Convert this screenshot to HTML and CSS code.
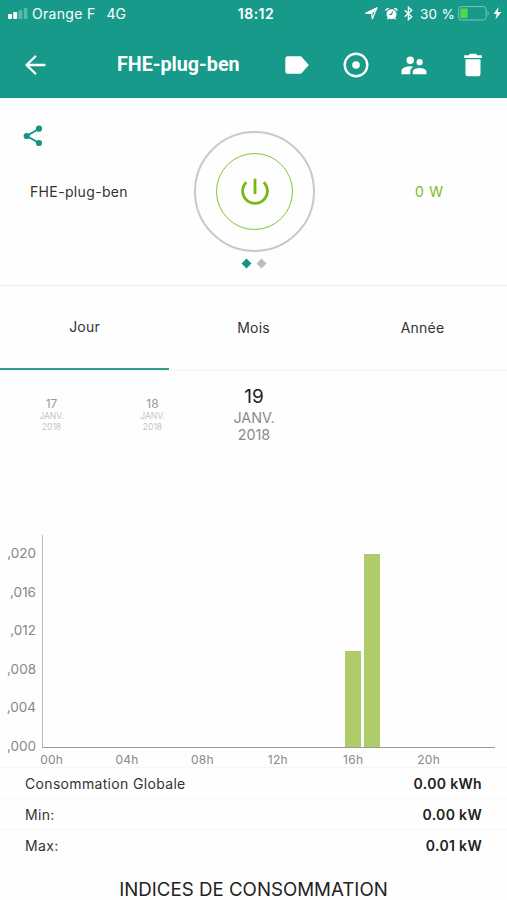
FILE: index.html
```html
<!DOCTYPE html>
<html lang="fr">

<head>
    <meta charset="UTF-8">
    <meta name="viewport" content="width=device-width, initial-scale=1.0">
    <title>FHE-plug-ben</title>
    <link rel="stylesheet" href="styles.css">
</head>

<body>
    <header class="header">
        <div class="status-bar">
            <div class="status-left">
                <svg class="signal" width="20" height="12" viewBox="0 0 20 12" fill="#fff">
                    <rect x="0" y="6" width="4" height="5" rx="1"/>
                    <rect x="5.2" y="4" width="4" height="7" rx="1"/>
                    <rect x="10.6" y="2" width="3.6" height="9" rx="1" opacity=".3"/>
                    <rect x="15.8" y="0" width="3.6" height="11" rx="1" opacity=".3"/>
                </svg>
                <span class="carrier">Orange F</span>
                <span class="network">4G</span>
            </div>
            <div class="clock">18:12</div>
            <div class="status-right">
                <svg width="13" height="13" viewBox="0 0 13 13" fill="none" stroke="#fff" stroke-width="1.2" stroke-linejoin="round">
                    <path d="M1 6.2L11.8 1 7.4 11.8 6.6 6.4z"/>
                    <path d="M1 6.2L11.8 1 6.6 6.4z" fill="#fff"/>
                </svg>
                <svg class="alarm" width="13" height="14" viewBox="0 0 13 14">
                    <path d="M3.4 10.8l-1 1.5M9.6 10.8l1 1.5" stroke="#fff" stroke-width="1.3"/>
                    <path d="M.7 4.2A2.3 2.3 0 0 1 4.2 1.4zM12.3 4.2A2.3 2.3 0 0 0 8.8 1.4z" fill="#fff"/>
                    <circle cx="6.5" cy="7.3" r="5" fill="#fff"/>
                    <path d="M7.6 4.4L6.6 7.4H4.4" stroke="#189a8a" stroke-width="1.1" fill="none"/>
                </svg>
                <svg class="bluetooth" width="9" height="15" viewBox="0 0 9 15" fill="none" stroke="#fff" stroke-width="1.3">
                    <path d="M.7 4.3l7.1 6.4-3.4 3V1.3l3.4 3-7.1 6.4"/>
                </svg>
                <span class="percent">30 %</span>
                <svg class="battery" width="32" height="15" viewBox="0 0 32 15">
                    <rect x=".6" y=".6" width="27.5" height="13.4" rx="2.6" fill="none" stroke="#7fc5bc" stroke-width="1"/>
                    <rect x="2.2" y="2.5" width="7.5" height="9.6" rx="1" fill="#4cd84f"/>
                    <path d="M29.6 5.3a2.3 2.3 0 0 1 0 4z" fill="#7fc5bc"/>
                </svg>
                <svg width="9" height="13" viewBox="0 0 9 13" fill="#fff">
                    <path d="M5.6 0L.6 7.1h3.1L2.4 12.6 8.4 4.9H4.8z"/>
                </svg>
            </div>
        </div>
        <nav class="toolbar">
            <svg class="back" width="24" height="22" viewBox="0 0 24 22" fill="none" stroke="#fff" stroke-width="2.3" stroke-linecap="round" stroke-linejoin="round">
                <path d="M20.5 11H3M11.3 2.5L2.5 11l8.800 8.500"/>
            </svg>
            <h1>FHE-plug-ben</h1>
            <div class="actions">
                <svg width="30" height="30" viewBox="0 0 30 30" fill="#fff">
                    <path d="M18.2 6.3c.8 0 1.5.4 2 1.1L26.8 15l-6.6 7.6c-.5.7-1.2 1.1-2 1.1H5.8a2.5 2.5 0 0 1-2.5-2.5V8.8a2.5 2.5 0 0 1 2.5-2.5z"/>
                </svg>
                <svg width="30" height="30" viewBox="0 0 30 30">
                    <circle cx="15" cy="15" r="11.3" fill="none" stroke="#fff" stroke-width="2.4"/>
                    <circle cx="15" cy="15" r="3.8" fill="#fff"/>
                </svg>
                <svg width="30" height="30" viewBox="0 0 24 24" fill="#fff">
                    <path d="M16.500 12.200a2.500 2.500 0 1 0 0-5 2.500 2.500 0 0 0 0 5zM9 11.200a3 3 0 1 0 0-6 3 3 0 0 0 0 6zm7.500 3.100c-1.830 0-5.500.92-5.500 2.750V19.300h11v-2.250c0-1.830-3.670-2.750-5.500-2.750zM9 13c-2.330 0-7 1.170-7 3.500v2.800h7v-2.250c0-.85.330-2.340 2.370-3.470C10.500 13.100 9.660 13 9 13z"/>
                </svg>
                <svg width="30" height="30" viewBox="0 0 30 30" fill="#fff">
                    <path d="M6.200 5.200h4.500L12 3.700h6l1.300 1.500h4.500v2.900H6.200zM7.500 9.300h15v14.500a2.500 2.500 0 0 1-2.500 2.500H10a2.500 2.500 0 0 1-2.500-2.500z"/>
                </svg>
            </div>
        </nav>
    </header>

    <section class="device">
        <div class="device-side">
            <svg class="share" width="20" height="22" viewBox="0 0 20 22" fill="#159482">
                <path d="M16 3.700L3.700 11 16 18" fill="none" stroke="#159482" stroke-width="1.900"/>
                <circle cx="16" cy="3.700" r="3.100"/>
                <circle cx="3.700" cy="11" r="3.100"/>
                <circle cx="16" cy="18" r="3.100"/>
            </svg>
            <span class="device-name">FHE-plug-ben</span>
        </div>
        <div class="device-center">
            <div class="power-ring">
                <div class="power-button">
                    <svg width="30" height="30" viewBox="0 0 30 30" fill="none" stroke="#78b814" stroke-width="2.800">
                        <path d="M15 1.800v15.200M6.300 5.200a12.400 12.400 0 1 0 17.400 0"/>
                    </svg>
                </div>
            </div>
            <div class="pager">
                <span class="dot active"></span>
                <span class="dot"></span>
            </div>
        </div>
        <div class="device-power">0 W</div>
    </section>

    <div class="tabs">
        <div class="tab active">Jour</div>
        <div class="tab">Mois</div>
        <div class="tab">Année</div>
    </div>

    <div class="dates">
        <div class="date"><b>17</b><span>JANV.</span><span>2018</span></div>
        <div class="date"><b>18</b><span>JANV.</span><span>2018</span></div>
        <div class="date current"><b>19</b><span>JANV.</span><span>2018</span></div>
    </div>

    <section class="chart">
        <div class="chart-body">
            <div class="y-axis">
                <span>,020</span>
                <span>,016</span>
                <span>,012</span>
                <span>,008</span>
                <span>,004</span>
                <span>,000</span>
            </div>
            <div class="plot">
                <div class="bar h16" style="height: 96px"></div>
                <div class="bar h17" style="height: 193px"></div>
            </div>
        </div>
        <div class="x-axis">
            <span>00h</span>
            <span>04h</span>
            <span>08h</span>
            <span>12h</span>
            <span>16h</span>
            <span>20h</span>
        </div>
    </section>

    <div class="summary">
        <div class="row"><span>Consommation Globale</span><strong>0.00 kWh</strong></div>
        <div class="row"><span>Min:</span><strong>0.00 kW</strong></div>
        <div class="row"><span>Max:</span><strong>0.01 kW</strong></div>
    </div>

    <h2>INDICES DE CONSOMMATION</h2>
</body>

</html>
```
FILE: styles.css
```css
* {
    box-sizing: border-box;
}

body {
    margin: 0;
    height: 900px;
    overflow: hidden;
    background-color: #fefefe;
    color: #333;
    font-family: Inter, "Liberation Sans", sans-serif;
    font-size: 14px;
}

svg {
    display: block;
    flex-shrink: 0;
}

/* header */
.header {
    height: 98px;
    background-color: #189a8a;
    color: #fff;
}

.status-bar {
    display: grid;
    grid-template-columns: 1fr 60px 1fr;
    align-items: center;
    height: 27px;
    padding: 0 5px 0 8px;
    white-space: nowrap;
}

.status-left,
.status-right {
    display: flex;
    align-items: center;
}

.status-right {
    justify-content: flex-end;
}

.carrier {
    margin-left: 4px;
    letter-spacing: 0.3px;
}

.network {
    margin-left: 11px;
}

.clock {
    padding-left: 2px;
    text-align: center;
    font-weight: 600;
    letter-spacing: 0.5px;
}

.alarm {
    margin-left: 7px;
}

.bluetooth {
    margin-left: 6px;
}

.percent {
    margin: 0 3px 0 7px;
    font-size: 13.5px;
    letter-spacing: 0.3px;
}

.battery {
    margin-right: 3px;
}

.toolbar {
    display: flex;
    align-items: center;
    height: 75px;
    padding: 0 19px 0 24px;
}

.toolbar h1 {
    margin: 0 0 0 69px;
    font-family: Roboto, sans-serif;
    font-size: 19.7px;
    font-weight: 700;
    white-space: nowrap;
}

.actions {
    display: flex;
    gap: 28.7px;
    margin-left: auto;
}

/* device */
.device {
    display: grid;
    grid-template-columns: 194px 121px 1fr;
    height: 188px;
    border-bottom: 1px solid #eee;
}

.device-side {
    padding: 27px 0 0 23px;
}

.device-name {
    display: block;
    margin: 35px 0 0 7px;
    line-height: 20px;
    letter-spacing: 0.35px;
}

.device-center {
    padding-top: 33px;
}

.power-ring {
    display: flex;
    align-items: center;
    justify-content: center;
    width: 121px;
    height: 121px;
    border: 2px solid #c9c9cb;
    border-radius: 50%;
}

.power-button {
    display: flex;
    align-items: center;
    justify-content: center;
    width: 77px;
    height: 77px;
    border: 1.5px solid #84c340;
    border-radius: 50%;
}

.pager {
    display: flex;
    justify-content: center;
    gap: 8px;
    margin: 8px 1px 0 0;
}

.dot {
    width: 7px;
    height: 7px;
    background-color: #bbb;
    transform: rotate(45deg);
}

.dot.active {
    background-color: #159482;
}

.device-power {
    padding: 84px 0 0 100px;
    color: #7dbb22;
    line-height: 20px;
    letter-spacing: 0.8px;
}

/* period tabs */
.tabs {
    display: grid;
    grid-template-columns: repeat(3, 1fr);
    height: 85px;
    border-bottom: 1px solid #f3f3f3;
}

.tab {
    height: 84px;
    line-height: 84px;
    text-align: center;
    letter-spacing: 0.2px;
}

.tab.active {
    line-height: 82px;
    border-bottom: 2.5px solid #2f9c8c;
}

.dates {
    display: grid;
    grid-template-columns: 101px 101px 102px;
    height: 164px;
    padding-left: 1px;
}

.date {
    display: flex;
    flex-direction: column;
    padding-top: 25px;
    text-align: center;
    font-size: 8.5px;
    line-height: 10.5px;
    color: #c4c4c4;
}

.date b {
    font-size: 12px;
    font-weight: 400;
    line-height: 15px;
    color: #999;
}

.date.current {
    padding-top: 14px;
    font-size: 14.3px;
    line-height: 17px;
    color: #8a8a8a;
}

.date.current b {
    font-size: 19px;
    line-height: 24px;
    color: #222;
}

/* chart */
.chart {
    height: 232px;
    color: #888;
}

.chart-body {
    display: flex;
    height: 213px;
}

.y-axis {
    display: flex;
    flex-direction: column;
    width: 42px;
    margin-top: -1px;
    padding-right: 6px;
    text-align: right;
    font-size: 13.5px;
    line-height: 38.6px;
}

.plot {
    display: grid;
    grid-template-columns: repeat(24, 1fr);
    align-items: end;
    width: 453px;
    border-left: 1px solid #bbb;
    border-bottom: 1px solid #999;
}

.bar {
    width: 16px;
    margin-left: 1px;
    background-color: #afcc6b;
}

.h16 {
    grid-column: 17;
}

.h17 {
    grid-column: 18;
}

.x-axis {
    display: grid;
    grid-template-columns: repeat(6, 75.4px);
    margin-left: 14px;
    padding-top: 4px;
    font-size: 12px;
    line-height: 16px;
    text-align: center;
    letter-spacing: 0.3px;
}

/* summary */
.row {
    display: flex;
    justify-content: space-between;
    height: 31px;
    padding: 0 25px;
    border-top: 1px solid #f6f6f6;
    line-height: 31px;
    letter-spacing: 0.33px;
}

.row strong {
    font-weight: 600;
    color: #222;
}

h2 {
    margin: 18px 0 0;
    text-align: center;
    font-size: 18.7px;
    font-weight: 400;
    line-height: 24px;
    color: #222;
}
```
